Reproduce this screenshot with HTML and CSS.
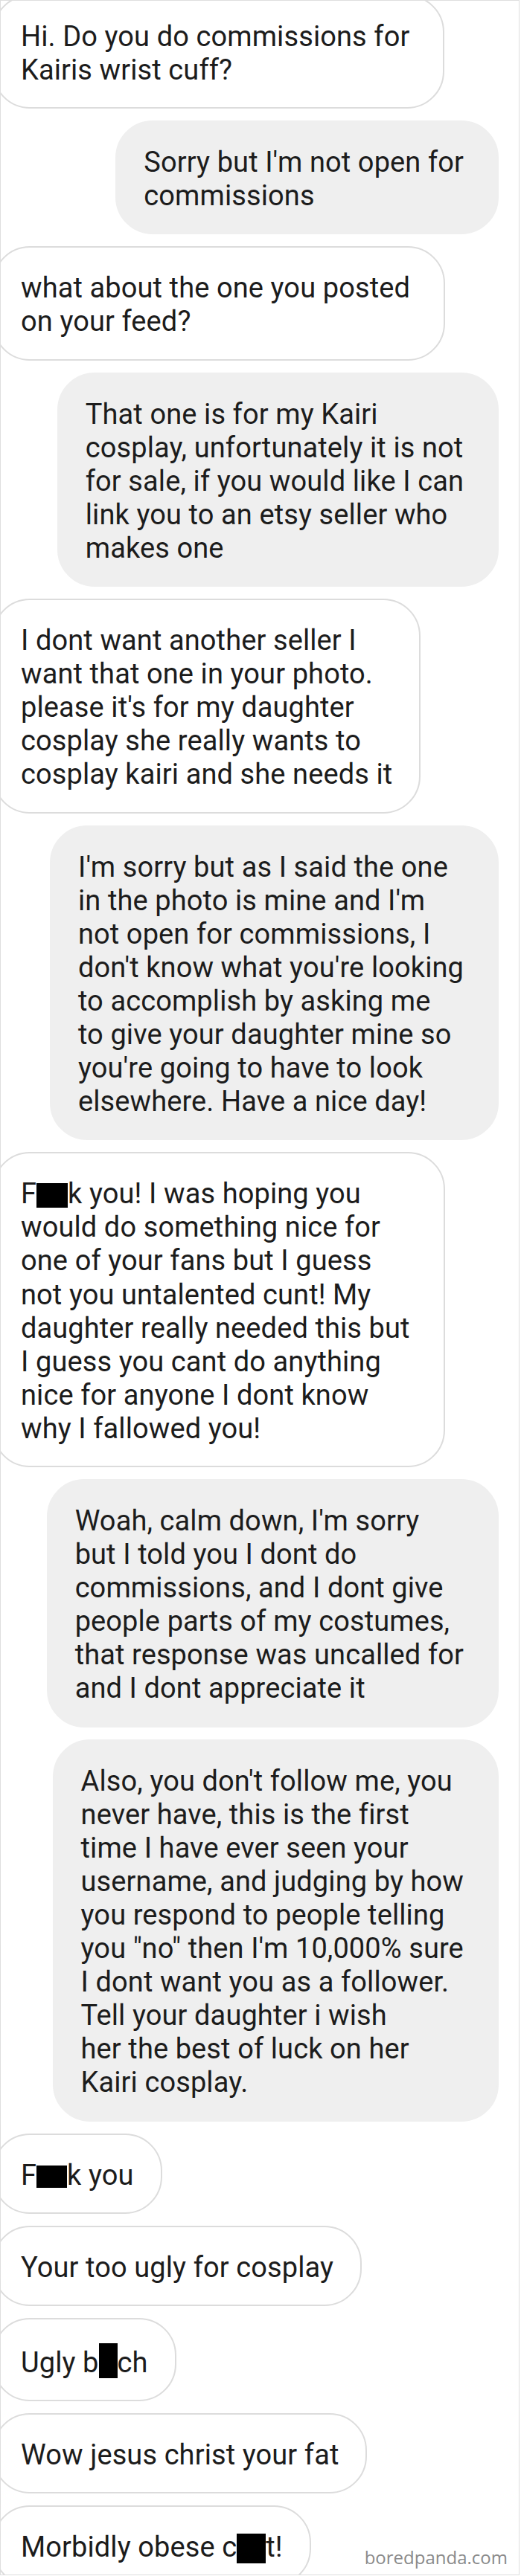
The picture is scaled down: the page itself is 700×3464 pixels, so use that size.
FILE: index.html
```html
<!DOCTYPE html>
<html lang="en">

<head>
	<meta charset="UTF-8">
	<meta name="viewport"
				content="width=device-width, initial-scale=1.0">
	<title>Kairi wrist cuff</title>
	<link rel="stylesheet" href="styles.css">
</head>

<body>
	<div class="screen">
		<div class="thread">
			<div class="msg in long">Hi. Do you do commissions for<br>Kairis wrist cuff?</div>
			<div class="msg out long">Sorry but I'm not open for<br>commissions</div>
			<div class="msg in long">what about the one you posted<br>on your feed?</div>
			<div class="msg out long">That one is for my Kairi<br>cosplay, unfortunately it is not<br>for sale, if you would like I can<br>link you to an etsy seller who<br>makes one</div>
			<div class="msg in">I dont want another seller I<br>want that one in your photo.<br>please it's for my daughter<br>cosplay she really wants to<br>cosplay kairi and she needs it</div>
			<div class="msg out long">I'm sorry but as I said the one<br>in the photo is mine and I'm<br>not open for commissions, I<br>don't know what you're looking<br>to accomplish by asking me<br>to give your daughter mine so<br>you're going to have to look<br>elsewhere. Have a nice day!</div>
			<div class="msg in long">F<span class="censor censor-uc"></span>k you! I was hoping you<br>would do something nice for<br>one of your fans but I guess<br>not you untalented cunt! My<br>daughter really needed this but<br>I guess you cant do anything<br>nice for anyone I dont know<br>why I fallowed you!</div>
			<div class="msg out long">Woah, calm down, I'm sorry<br>but I told you I dont do<br>commissions, and I dont give<br>people parts of my costumes,<br>that response was uncalled for<br>and I dont appreciate it</div>
			<div class="msg out long">Also, you don't follow me, you<br>never have, this is the first<br>time I have ever seen your<br>username, and judging by how<br>you respond to people telling<br>you "no" then I'm 10,000% sure<br>I dont want you as a follower.<br>Tell your daughter i wish<br>her the best of luck on her<br>Kairi cosplay.</div>
			<div class="msg in">F<span class="censor censor-short"></span>k you</div>
			<div class="msg in">Your too ugly for cosplay</div>
			<div class="msg in">Ugly b<span class="censor censor-tall"></span>ch</div>
			<div class="msg in">Wow jesus christ your fat</div>
			<div class="msg in">Morbidly obese c<span class="censor censor-un"></span>t!</div>
		</div>
		<div class="watermark">boredpanda.com</div>
	</div>
</body>

</html>
```

FILE: styles.css
```css
* {
	box-sizing: border-box;
}

body {
	margin: 0;
	background-color: #fff;
	font-family: Roboto, "Liberation Sans", sans-serif;
}

.screen {
	position: relative;
	width: 698px;
	height: 3463px;
	border: 1px solid #dedede;
	background-color: #fff;
	overflow: hidden;
}

.thread {
	display: flex;
	flex-direction: column;
	gap: 16px;
	margin-top: -8px;
}

.msg {
	border: 2px solid #efefef;
	border-radius: 50px;
	padding: 32px 36px 27px 36px;
	font-size: 38px;
	letter-spacing: 0.1px;
	line-height: 45.1px;
	color: #1c1c1c;
	white-space: nowrap;
}

.msg.long {
	padding-right: 45px;
}

.msg.in {
	align-self: flex-start;
	margin-left: -11px;
	background-color: #fff;
	border-color: #dcdcdc;
}

.msg.out {
	align-self: flex-end;
	margin-right: 27px;
	background-color: #efefef;
}

.censor {
	display: inline-block;
	background-color: #000;
}

.censor-uc {
	width: 42px;
	height: 33px;
	vertical-align: -6px;
}

.censor-short {
	width: 41px;
	height: 30px;
	vertical-align: -4px;
}

.censor-tall {
	width: 25px;
	height: 47px;
	vertical-align: -8px;
}

.censor-un {
	width: 39px;
	height: 40px;
	vertical-align: -9px;
}

.watermark {
	position: absolute;
	right: 15px;
	bottom: 7px;
	font-family: "Open Sans", sans-serif;
	font-size: 24px;
	color: #8a8a8a;
}
```
